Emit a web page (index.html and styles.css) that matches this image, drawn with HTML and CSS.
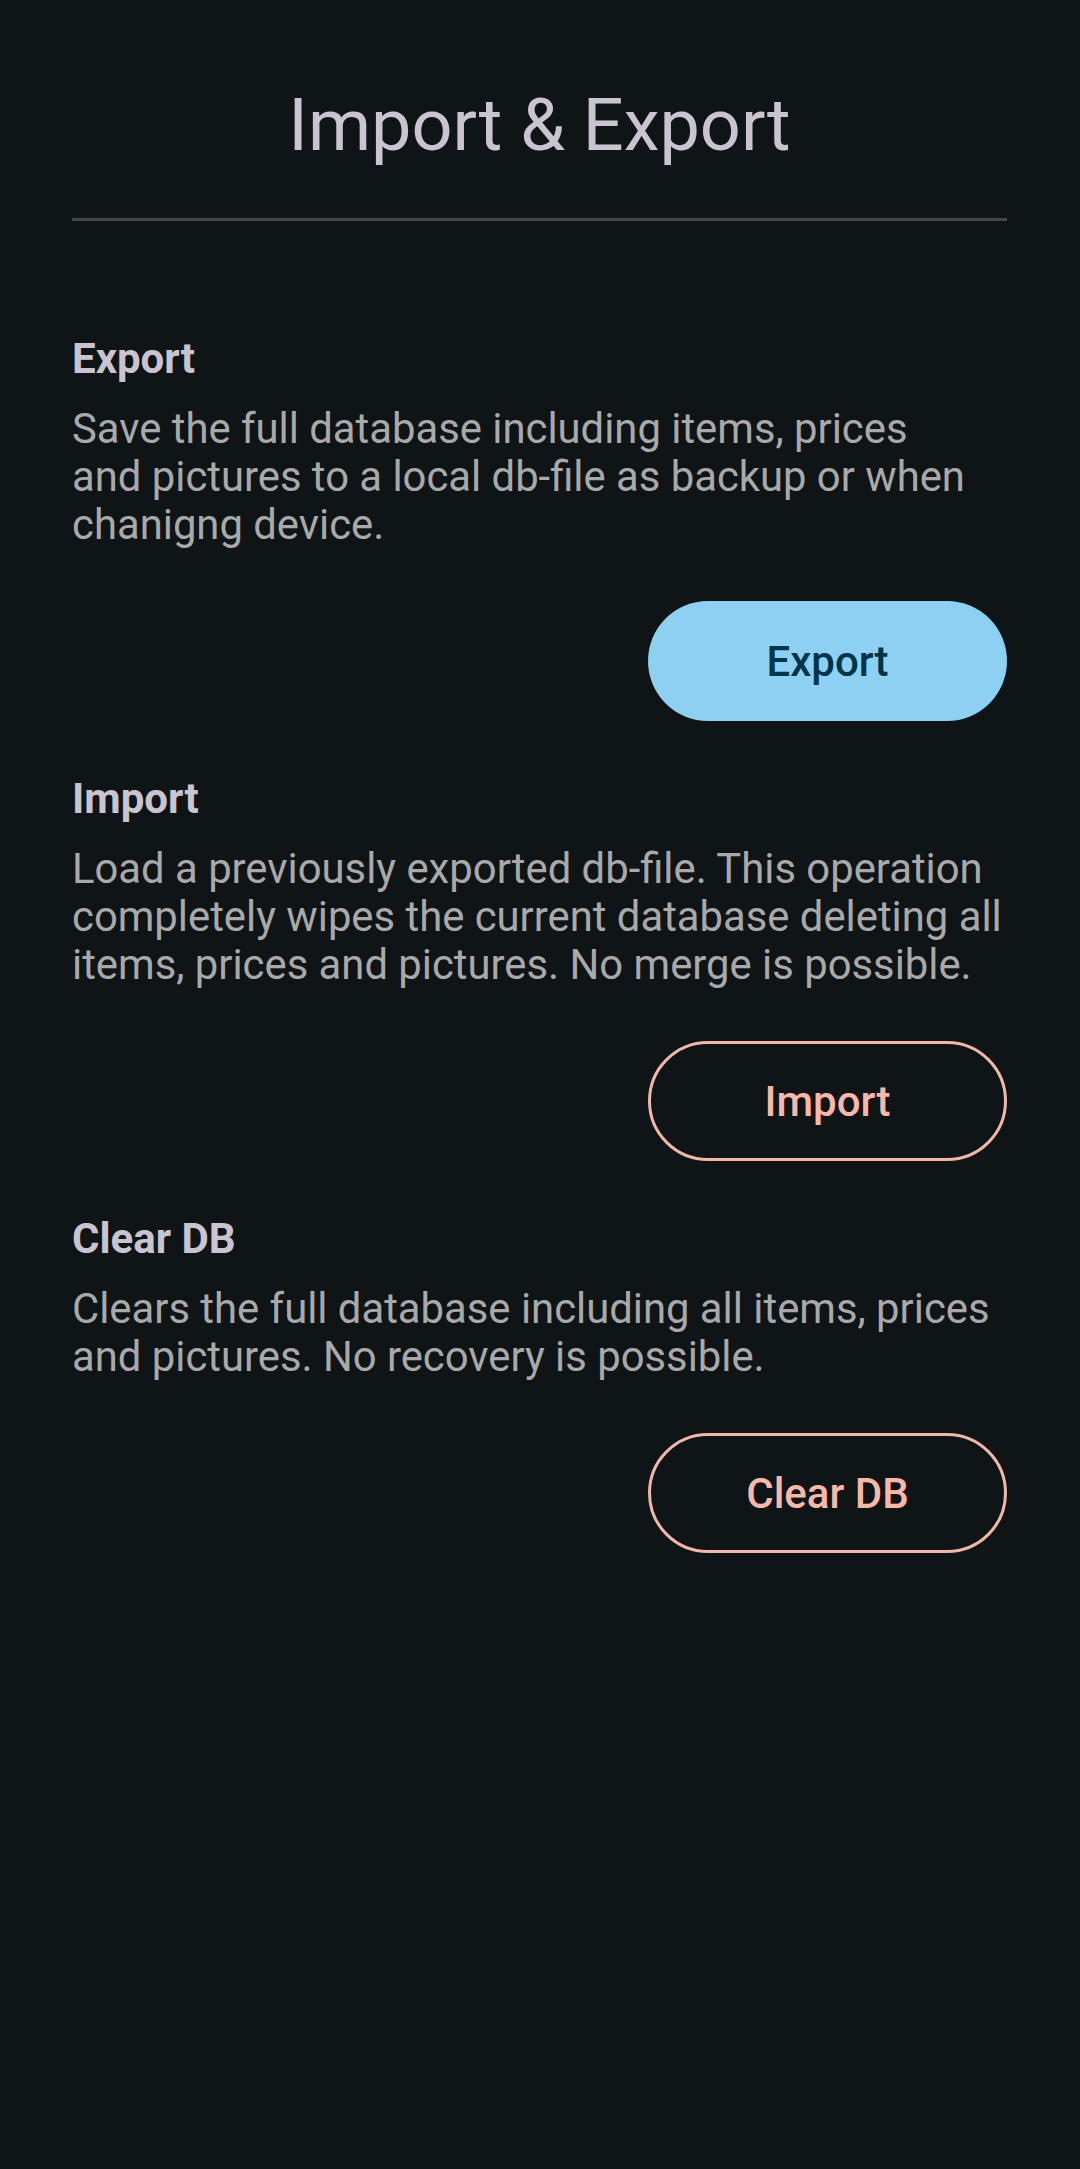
FILE: index.html
```html
<!DOCTYPE html>
<html>
<head>
    <title>Import &amp; Export</title>
    <link rel="stylesheet" href="styles.css">
</head>
<body>
    <div class="page">
        <h1 class="page-title">Import &amp; Export</h1>
        <div class="divider"></div>

        <div class="section first">
            <div class="section-title">Export</div>
            <p class="section-text">Save the full database including items, prices<br>and pictures to a local db-file as backup or when<br>chanigng device.</p>
            <div class="action-row">
                <button class="filled-btn">Export</button>
            </div>
        </div>

        <div class="section">
            <div class="section-title">Import</div>
            <p class="section-text">Load a previously exported db-file. This operation<br>completely wipes the current database deleting all<br>items, prices and pictures. No merge is possible.</p>
            <div class="action-row">
                <button class="outlined-btn">Import</button>
            </div>
        </div>

        <div class="section">
            <div class="section-title">Clear DB</div>
            <p class="section-text">Clears the full database including all items, prices<br>and pictures. No recovery is possible.</p>
            <div class="action-row">
                <button class="outlined-btn">Clear DB</button>
            </div>
        </div>
    </div>
</body>
</html>
```

FILE: styles.css
```css
body {
    margin: 0;
    background-color: #0f1417;
    font-family: Roboto, "Noto Sans", sans-serif;
    min-height: 2169px;
}

.page {
    padding: 84px 73px 0 72px;
}

.page-title {
    margin: 0;
    font-size: 72px;
    font-weight: 400;
    line-height: 83px;
    text-align: center;
    color: #cac4d0;
}

.divider {
    height: 3px;
    margin-top: 51px;
    background-color: #43474b;
}

.section {
    margin-top: 54px;
}

.section.first {
    margin-top: 114px;
}

.section-title {
    font-size: 42px;
    font-weight: 700;
    line-height: 48px;
    color: #cac4d0;
}

.section-text {
    margin: 22px -40px 0 0;
    font-size: 41.8px;
    line-height: 48px;
    color: #a9a9aa;
}

.action-row {
    display: flex;
    justify-content: flex-end;
    margin-top: 52px;
}

button {
    width: 359px;
    height: 120px;
    border-radius: 60px;
    font-family: Roboto, "Noto Sans", sans-serif;
    font-size: 42px;
    font-weight: 500;
    cursor: pointer;
}

.filled-btn {
    border: none;
    background-color: #8dd0f1;
    color: #003549;
}

.outlined-btn {
    border: 3px solid #f0b8aa;
    background-color: transparent;
    color: #f8b8a8;
}
```
